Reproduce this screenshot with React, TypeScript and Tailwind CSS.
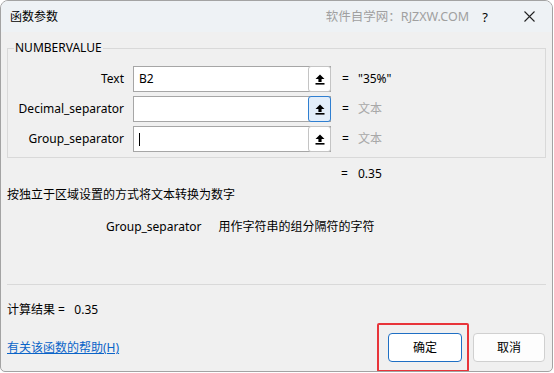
import React from 'react';

const FONT = "font-['Noto_Sans','Noto_Sans_CJK_SC',sans-serif]";

function UpIcon() {
  return (
    <svg width="10" height="11" viewBox="0 0 10 11">
      <path d="M5 0.5 L9.5 5 H6.6 V8 H3.4 V5 H0.5 Z" fill="#000" />
      <rect x="0.5" y="9" width="9" height="1.6" fill="#000" />
    </svg>
  );
}

type Row = { label: string; value: string; text?: string; dim?: boolean; focus?: boolean; caret?: boolean };

const rows: Row[] = [
  { label: 'Text', text: 'B2', value: '"35%"' },
  { label: 'Decimal_separator', value: '文本', dim: true, focus: true },
  { label: 'Group_separator', value: '文本', dim: true, caret: true },
];

function ArgRow({ row }: { row: Row }) {
  return (
    <div className="flex items-center h-[26px]">
      <div className="w-[116px] text-right leading-[16px]">{row.label}</div>
      <div className="ml-[9px] w-[198px] h-[26px] flex bg-white border border-[#a6a6a6]">
        <div className="flex-1 flex items-center pl-[5px] leading-[16px]">
          {row.text}
          {row.caret && <span className="block w-[1px] h-[13px] bg-black" />}
        </div>
        <button
          className={`w-[23px] h-[26px] -mt-[1px] -mr-[1px] flex items-center justify-center rounded-[3px] border ${
            row.focus ? 'border-[#2f7fd1] bg-[#e3eefa]' : 'border-[#c4c4c4] bg-white'
          }`}
        >
          <UpIcon />
        </button>
      </div>
      <div className="ml-[11px] w-[16px] leading-[16px]">=</div>
      <div className={`leading-[16px] ${row.dim ? 'text-[#a8a8a8]' : 'text-black'}`}>{row.value}</div>
    </div>
  );
}

export default function App() {
  return (
    <div className={`w-[554px] h-[373px] bg-white ${FONT} text-[12px] text-black`}>
      <div className="w-[553px] h-[372px] flex flex-col bg-[#f0f0f0] border border-[#a3a3a3] rounded-t-[8px] rounded-b-[5px] overflow-hidden">
        {/* title bar */}
        <div className="h-[31px] shrink-0 flex items-center bg-[#eef2f5] pl-[9px]">
          <span className="text-[12px] leading-[16px]">函数参数</span>
          <span className="ml-auto text-[12.5px] text-[#a0a0a0] leading-[16px]">软件自学网：RJZXW.COM</span>
          <span className="ml-[10px] w-[12px] text-center text-[13px] leading-[16px]">?</span>
          <span className="ml-[33px] mr-[17px] flex items-center">
            <svg width="11" height="11" viewBox="0 0 11 11">
              <path d="M0.5 0.5 L10.5 10.5 M10.5 0.5 L0.5 10.5" stroke="#222" strokeWidth="1.1" />
            </svg>
          </span>
        </div>

        {/* arguments group */}
        <fieldset className="mt-[8px] mx-[6px] w-[539px] border border-[#d9d9d9] pt-[10px] pb-[5px] flex flex-col gap-[4px]">
          <legend className="ml-[6px] px-[1px] leading-[16px]">NUMBERVALUE</legend>
          {rows.map((r) => (
            <ArgRow key={r.label} row={r} />
          ))}
        </fieldset>

        <div className="mt-[8px] flex leading-[16px]">
          <span className="ml-[340px] w-[17px]">=</span>
          <span>0.35</span>
        </div>

        <div className="mt-[5px] ml-[6px] leading-[16px]">按独立于区域设置的方式将文本转换为数字</div>

        <div className="mt-[16px] ml-[105px] flex leading-[16px]">
          <span>Group_separator</span>
          <span className="ml-[17px]">用作字符串的组分隔符的字符</span>
        </div>

        <div className="mt-[49px] mx-[6px] h-[1px] bg-[#d9d9d9]" />

        <div className="mt-[17px] ml-[6px] leading-[16px]">
          计算结果 =&nbsp;&nbsp; 0.35
        </div>

        <div className="mt-[15px] flex items-center pr-[7px]">
          <a href="#" className="ml-[6px] mt-[1px] text-[#0a64c8] underline leading-[16px]">
            有关该函数的帮助(H)
          </a>
          <div className="ml-auto relative">
            <button className="w-[74px] h-[29px] rounded-[4px] border border-[#1f6fc4] bg-white">确定</button>
            <div className="absolute -left-[11px] -right-[7px] -top-[10px] -bottom-[10px] border-2 border-[#e8343a] rounded-[2px]" />
          </div>
          <button className="ml-[11px] w-[72px] h-[29px] rounded-[4px] border border-[#d0d0d0] bg-[#fdfdfd]">取消</button>
        </div>
      </div>
    </div>
  );
}
